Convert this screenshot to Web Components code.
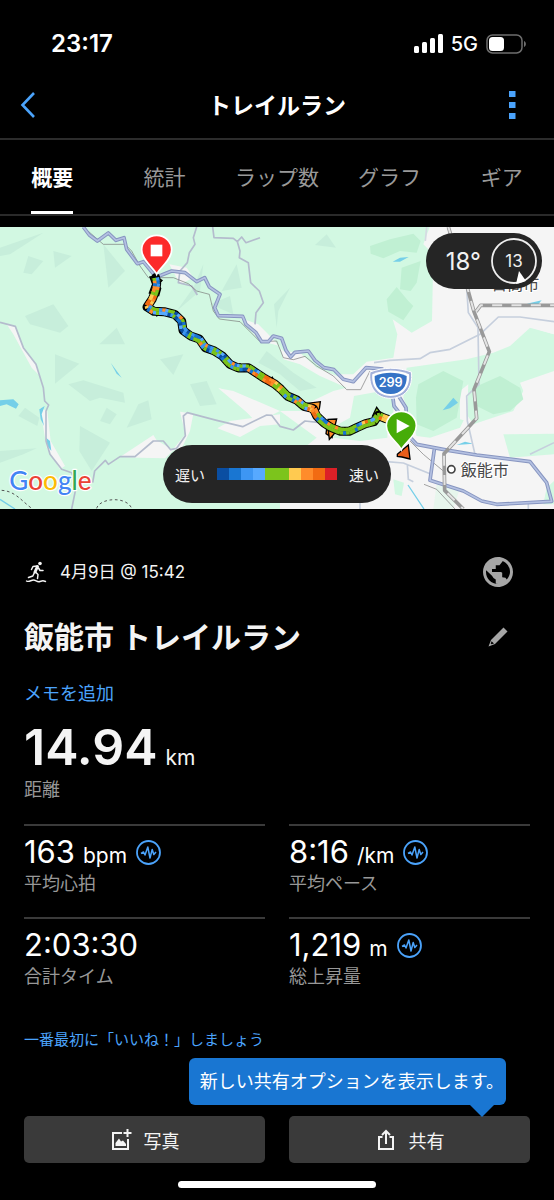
<!DOCTYPE html>
<html lang="ja">
<head>
<meta charset="utf-8">
<meta name="viewport" content="width=device-width, initial-scale=1">
<title>トレイルラン</title>
<style>
  html {
    --blue: #4ba3fb;
    --grey: #989898;
    --line: #3a3a3a;
  }

  body {
    margin: 0;
    background: #000;
    color: #f4f4f4;
    font-family: Inter, "Noto Sans CJK JP", sans-serif;
    font-size: 18px;
  }
</style>
</head>
<body>
<activity-page></activity-page>

<script>
const shared = `
  * { box-sizing: border-box; }
  svg { display: block; flex: none; }
  button {
    margin: 0;
    padding: 0;
    border: 0;
    background: none;
    color: inherit;
    font: inherit;
    cursor: pointer;
  }
  a { color: inherit; text-decoration: none; }
`;

class BaseElement extends HTMLElement {
  constructor() {
    super();
    this.attachShadow({ mode: "open" });
    this.shadowRoot.innerHTML = `<style>${shared}</style>${this.render()}`;
  }

  render() {
    return "";
  }
}

class StatusBar extends BaseElement {
  render() {
    return `
      <style>
        :host {
          display: flex;
          justify-content: space-between;
          align-items: center;
          padding: 28px 28px 12px 51px;
          height: 72px;
          color: #fff;
        }
        .time { font-size: 24px; font-weight: 600; line-height: 32px; }
        .right { display: flex; align-items: center; gap: 8px; }
        .net { font-size: 20px; font-weight: 500; line-height: 32px; }
      </style>
      <span class="time">23:17</span>
      <span class="right">
        <svg width="29" height="20" viewBox="0 0 29 20" fill="#fff">
          <rect x="0" y="12" width="5" height="7" rx="1.5"/>
          <rect x="8" y="8" width="5" height="11" rx="1.5"/>
          <rect x="16" y="4" width="5" height="15" rx="1.5"/>
          <rect x="24" y="0" width="5" height="19" rx="1.5"/>
        </svg>
        <span class="net">5G</span>
        <svg width="40" height="20" viewBox="0 0 40 20">
          <rect x="1" y="1" width="35" height="18" rx="5.5" fill="none" stroke="#6e6e6e" stroke-width="1.5"/>
          <rect x="3" y="3" width="15" height="14" rx="3.5" fill="#fff"/>
          <path d="M38 7c2.500 1 2.500 5 0 6z" fill="#6e6e6e"/>
        </svg>
      </span>
    `;
  }
}

class NavBar extends BaseElement {
  render() {
    return `
      <style>
        :host {
          display: grid;
          grid-template-columns: 56px 1fr 56px;
          align-items: center;
          height: 68px;
          border-bottom: 2px solid #2c2c2c;
          color: #fff;
        }
        h1 {
          margin: 0;
          padding-top: 2px;
          text-align: center;
          font-size: 23px;
          line-height: 32px;
          font-weight: 700;
        }
        button { height: 48px; display: grid; align-items: center; }
        .back { padding-left: 20px; }
        .more { justify-content: end; padding-right: 38px; }
      </style>
      <button class="back" aria-label="戻る">
        <svg width="17" height="28" viewBox="0 0 17 28">
          <path d="M14 2L2.500 14L14 26" fill="none" stroke="var(--blue)" stroke-width="2.600"/>
        </svg>
      </button>
      <h1><slot></slot></h1>
      <button class="more" aria-label="メニュー">
        <svg width="7" height="28" viewBox="0 0 7 28" fill="var(--blue)">
          <path d="M0 0h6.500v6H0zM0 11h6.500v6H0zM0 22h6.500v6H0z"/>
        </svg>
      </button>
    `;
  }
}

class TabBar extends BaseElement {
  render() {
    return `
      <style>
        :host { display: block; overflow: hidden; border-bottom: 2px solid #2a2a2a; }
        nav {
          display: grid;
          grid-template-columns: repeat(5, 1fr);
          margin: 0 -4px;
          justify-items: center;
        }
        a {
          padding-top: 23px;
          height: 74px;
          border-bottom: 3px solid transparent;
          color: #999;
          font-size: 21px;
          line-height: 30px;
          white-space: nowrap;
        }
        .on { color: #fff; border-color: #fff; font-weight: 700; }
      </style>
      <nav>
        <a class="on" href="#summary" aria-current="page">概要</a>
        <a href="#stats">統計</a>
        <a href="#laps">ラップ数</a>
        <a href="#graph">グラフ</a>
        <a href="#gear">ギア</a>
      </nav>
    `;
  }
}

const PACE = ["#0a4ea2", "#1976d2", "#3d96f3", "#57a9ff", "#7cc41c", "#7cc41c", "#ffca50", "#ff8c2b", "#f26b12", "#dc2027"];

const ROUTE = [
  [467, 160], [470, 178], [467, 198], [457, 224], [441, 248], [462, 261], [492, 262],
  [524, 270], [545, 290], [549, 318], [572, 335], [598, 344], [616, 370], [642, 379],
  [667, 395], [690, 420], [715, 431], [745, 430], [768, 445], [795, 463], [824, 479],
  [842, 494], [862, 515], [890, 527], [912, 546], [940, 553], [950, 575], [972, 596],
  [992, 609], [1022, 621], [1047, 621], [1072, 609], [1097, 598], [1122, 592],
  [1135, 573], [1152, 581], [1172, 588]
];

class RouteMap extends BaseElement {
  render() {
    return `
      <style>
        :host { display: block; position: relative; height: 282px; background: #f5f5f5; overflow: hidden; }
        .map { width: 100%; height: 100%; }
        text { font-family: Inter, "Noto Sans CJK JP", sans-serif; }
        .logo {
          font-family: Lato, sans-serif;
          font-size: 78px;
          font-weight: 500;
          paint-order: stroke;
          stroke: #fff;
          stroke-width: 7px;
          stroke-linejoin: round;
        }
        .town { font-size: 48px; fill: #4a4a4a; paint-order: stroke; stroke: #fff; stroke-width: 6px; }
        .sign { font-size: 38px; font-weight: 600; fill: #fff; }
        .overlay {
          position: absolute;
          inset: 0;
          padding: 6px 12px;
          display: flex;
          flex-direction: column;
          justify-content: space-between;
          color: #f2f2f2;
        }
        .weather {
          align-self: flex-end;
          display: flex;
          align-items: center;
          gap: 10px;
          height: 56px;
          padding: 0 5px 0 20px;
          border-radius: 28px;
          background: #252525;
          font-size: 24px;
        }
        .scale {
          align-self: center;
          display: flex;
          align-items: center;
          gap: 12px;
          height: 58px;
          padding: 0 12px;
          border-radius: 29px;
          background: #252525;
          font-size: 15px;
        }
        .bar { display: flex; }
        .bar i { width: 12px; height: 12px; }
      </style>
      <svg class="map" viewBox="0 8 1662 846" preserveAspectRatio="xMidYMid slice">
        <rect y="0" width="1662" height="870" fill="#f5f5f5"/>

        <!-- forest -->
        <g fill="#d2f8e2">
          <path d="M0 0H1292L1270 60L1300 90L1296 290L1235 325L1178 285L1192 330L1180 400L1100 412L1060 450L1010 450L1085 540L1162 540L1162 640L1080 650L1000 640L960 600L910 560L840 560L700 500L655 492L750 572L825 590L840 640V870H0Z"/>
          <path d="M1220 430L1400 405L1480 385L1530 365L1590 310L1662 330V440L1560 475L1570 500L1540 560L1420 600L1400 570L1380 610L1290 640L1250 635L1210 520Z"/>
          <path d="M1510 630L1662 628V690L1530 700Z"/>
          <path d="M1180 765L1212 775L1205 815L1185 810Z"/>
          <path d="M1640 790L1662 770V840H1630Z"/>
          <path d="M1310 780L1380 790L1360 854H1300Z" opacity=".4"/>
          <path d="M1060 510L1180 480V600L1060 610Z"/>
          <path d="M760 600L840 560L950 640L900 680H780Z"/>
        </g>
        <g fill="#f5f5f5">
          <path d="M0 292L46 306L70 370L108 420L120 455L95 430L40 330L20 300Z"/>
          <path d="M120 550L142 560L152 650L195 725L180 735L140 670Z"/>
          <path d="M360 698L460 632L470 648L520 678L495 702L420 700Z"/>
          <path d="M540 562L580 568L570 620L545 672L515 680L556 630Z"/>
          <path d="M690 590L840 570V600L780 605L720 638L652 612Z"/>
          <path d="M655 490L735 522L750 560L830 590L760 585L700 520Z"/>
          <path d="M508 120L560 130L580 160L540 180Z"/>
          <path d="M720 280L775 300L810 335L850 380L900 385L950 430L1060 475L1110 440L1185 430L1175 495L1062 515L1050 580L1005 605L910 580L905 545L1000 500L1040 490L960 455L900 420L850 405L840 365L780 350Z"/>
          <path d="M1380 500L1405 480L1400 590L1380 585Z"/>
          <path d="M1560 300L1662 330V290L1570 285Z"/>
        </g>
        <!-- relief -->
        <g fill="#c7eedb">
          <path d="M310 60L375 140L325 190Z"/>
          <path d="M85 95L130 110L95 150L70 145Z"/>
          <path d="M160 80L215 95L165 130Z"/>
          <path d="M0 70L130 25L30 90L0 95Z"/>
          <path d="M75 275L160 240L205 305L180 325L90 300Z"/>
          <path d="M350 310L298 360L375 360Z"/>
          <path d="M165 390L238 418L165 478Z"/>
          <path d="M480 405L550 390L520 452Z"/>
          <path d="M205 480L250 468L370 505L375 535L300 520L270 530Z"/>
          <path d="M55 575L75 550L118 580L112 605Z"/>
          <path d="M415 540L445 528L455 585L380 610Z"/>
          <path d="M240 605L330 655L275 740L238 680Z"/>
          <path d="M0 680L110 672L70 690L0 715Z"/>
          <path d="M570 480L620 470L650 540L600 545Z"/>
          <path d="M610 120L580 190L530 260L600 200Z"/>
          <path d="M710 120L725 190L665 200Z"/>
          <path d="M630 240L690 215L700 270Z"/>
          <path d="M945 62L980 30L1008 70Z"/>
          <path d="M822 240L870 190L835 260L830 310Z"/>
          <path d="M775 415L800 380L880 445L950 490L900 500L840 450Z"/>
          <path d="M320 550L350 570L330 600L300 590Z"/>
        </g>
        <g fill="#c0f0d3">
          <path d="M1110 65L1170 45L1240 28L1262 50L1250 85L1200 80L1150 102L1112 88Z"/>
          <path d="M1160 225L1190 188L1225 230L1240 245L1210 288L1165 262Z"/>
          <path d="M1205 130L1262 110L1250 175L1232 200L1200 195Z"/>
          <path d="M1255 480L1330 440L1390 470L1370 580L1300 620L1250 600L1248 520Z"/>
          <path d="M1420 490L1500 455L1560 490L1570 525L1530 560L1480 570L1430 545Z"/>
        </g>
        <g fill="#75cfe8">
          <path d="M0 528L40 525L56 540L48 553L20 540L0 545Z"/>
          <path d="M332 415L365 460L350 448Z"/>
          <path d="M118 555L134 545L125 570L132 605L122 585Z"/>
          <path d="M138 640L150 650L154 680L142 665Z"/>
          <path d="M1178 112L1200 100L1226 98L1200 112Z"/>
          <path d="M1328 558L1360 520L1374 535L1350 552Z"/>
          <path d="M1580 238L1625 228L1615 240Z"/>
          <path d="M1370 662L1395 652L1420 658Z"/>
        </g>
        <path d="M1224 782L1272 854M0 825L45 854" fill="none" stroke="#75cfe8" stroke-width="4"/>

        <!-- local roads -->
        <g fill="none" stroke="#b4bccd" stroke-width="5" stroke-linejoin="round">
          <path d="M0 294L46 306L70 370L108 420L130 490L134 530L146 542L138 560L138 650L150 690L185 735L215 745L228 790L215 854"/>
          <path d="M278 775L284 740L316 708L325 720L360 697L405 697L460 650L490 650L512 676L530 672L556 634L550 575L562 565L650 588L728 607L800 572L815 573L840 606L880 617L915 590L960 595"/>
          <path d="M590 8L580 40L585 60L568 85L562 115L540 140L535 175L575 185L592 212"/>
          <path d="M638 8L642 40L700 42L712 52L725 38L738 55L780 40M712 52L720 80L718 100L745 115L752 175L778 200L790 235L768 265L765 300"/>
          <path d="M1122 415L1170 408L1260 403L1290 385L1350 375L1440 330L1495 278L1560 278L1662 292" stroke="#c6cfdd"/>
          <path d="M1400 190L1405 265L1434 310L1437 480L1400 515L1402 590L1425 690" stroke="#c6cfdd"/>
          <path d="M1280 8L1276 50" stroke="#d5d9e2"/>
          <path d="M1590 690L1662 655M1160 712L1210 716L1290 748M1222 720L1225 765L1240 772M1080 830V854M1585 830V854" stroke="#c6cfdd"/>
        </g>
        <g fill="none" stroke="#777" stroke-width="2">
          <path d="M250 8L310 60H375L395 80L420 125L445 160L520 160L565 178L590 200L628 210L640 260L658 284L720 292L780 352L830 350L850 400L880 406L915 396L950 425L1000 455L1040 496H1082L1110 440"/>
          <path d="M1230 650L1270 690L1330 740M1272 780L1310 795L1365 854"/>
          <path d="M5 798C45 800 65 830 95 852M290 852C300 820 380 815 395 852" stroke="#555" stroke-dasharray="8 8" stroke-width="3"/>
        </g>

        <!-- main roads -->
        <g fill="none" stroke-linejoin="round">
          <path d="M250 8L268 32L292 50L325 26L348 48L372 40L380 75L412 118L430 112L468 158L485 152L515 140L555 145L590 172L614 160L628 188L660 210L644 250L655 274L728 276L738 300L768 325L785 352L805 352L820 335L845 342L858 378L872 398L885 384L925 380L945 408L972 430L1002 436L1030 465L1060 472L1098 430L1150 434M1178 515L1182 545L1225 600M1196 515L1218 550L1222 630L1250 660L1345 678L1430 692L1590 712L1640 775L1655 831L1490 840L1445 830L1390 800L1290 768L1303 675" stroke="#8795c0" stroke-width="11"/>
          <path d="M250 8L268 32L292 50L325 26L348 48L372 40L380 75L412 118L430 112L468 158L485 152L515 140L555 145L590 172L614 160L628 188L660 210L644 250L655 274L728 276L738 300L768 325L785 352L805 352L820 335L845 342L858 378L872 398L885 384L925 380L945 408L972 430L1002 436L1030 465L1060 472L1098 430L1150 434M1178 515L1182 545L1225 600M1196 515L1218 550L1222 630L1250 660L1345 678L1430 692L1590 712L1640 775L1655 831L1490 840L1445 830L1390 800L1290 768L1303 675" stroke="#b4c1e2" stroke-width="5"/>
        </g>

        <!-- railway -->
        <g fill="none" stroke-linejoin="round">
          <path d="M1345 8L1402 190L1422 262L1468 382L1422 495L1430 582L1332 688L1334 798L1390 854M1428 262L1442 243H1662" stroke="#999" stroke-width="11"/>
          <path d="M1345 8L1402 190L1422 262L1468 382L1422 495L1430 582L1332 688L1334 798L1390 854M1428 262L1442 243H1662" stroke="#e4e4e4" stroke-width="6" stroke-dasharray="30 28"/>
        </g>

        <text class="town" x="1474" y="198">日高市</text>
        <circle cx="1354" cy="735" r="11" fill="#fff" stroke="#444" stroke-width="5"/>
        <text class="town" x="1382" y="754">飯能市</text>

        <g class="route"></g>

        <!-- national route sign -->
        <path d="M1110 443C1150 428 1194 428 1234 443C1240 490 1214 522 1172 522S1104 490 1110 443Z" fill="#a3b1da" stroke="#fff" stroke-width="3"/>
        <path d="M1117 450C1152 435 1192 435 1227 450C1231 488 1208 515 1172 515S1113 488 1117 450Z" fill="#fff"/>
        <path d="M1124 455C1156 442 1188 442 1220 455C1222 487 1202 509 1172 509S1122 487 1124 455Z" fill="#3573c6"/>
        <text class="sign" x="1172" y="488" text-anchor="middle">299</text>

        <!-- finish and start pins -->
        <path d="M470 150C462 130 425 108 425 76A45 43 0 0 1 515 76C515 108 478 130 470 150Z" fill="#fc2a2a" stroke="#fff" stroke-width="5"/>
        <path d="M452 61H487V96H452Z" fill="#fff"/>
        <path d="M1192 690L1225 662L1230 704L1206 698L1192 696Z" fill="#e85d1a" stroke="#000" stroke-width="4"/>
        <path d="M1204 676C1196 656 1159 636 1159 604A45 43 0 0 1 1249 604C1249 636 1212 656 1204 676Z" fill="#46ac08" stroke="#fff" stroke-width="5"/>
        <path d="M1190 584L1229 605L1190 627Z" fill="#fff"/>

        <text class="logo" x="28" y="797"><tspan fill="#4285f4">G</tspan><tspan fill="#ea4335">o</tspan><tspan fill="#fbbc05">o</tspan><tspan fill="#4285f4">g</tspan><tspan fill="#34a853">l</tspan><tspan fill="#ea4335">e</tspan></text>
      </svg>
      <div class="overlay">
        <div class="weather">
          <span>18°</span>
          <svg width="46" height="46" viewBox="0 0 46 46">
            <circle cx="23" cy="23" r="22" fill="none" stroke="#eee" stroke-width="1.800"/>
            <text x="23" y="29" font-size="17" fill="#eee" text-anchor="middle">13</text>
            <path d="M28 33L25 46L35 43Z" fill="#fff"/>
          </svg>
        </div>
        <div class="scale">
          <span>遅い</span>
          <span class="bar">${PACE.map((c) => `<i style="background:${c}"></i>`).join("")}</span>
          <span>速い</span>
        </div>
      </div>
    `;
  }

  connectedCallback() {
    this.drawRoute();
  }

  drawRoute() {
    const group = this.shadowRoot.querySelector(".route");
    const d = "M" + ROUTE.map((p) => p.join(" ")).join("L");
    // spikes where the GPS track jumps sideways
    const spikes = `
      <path d="M450 158L466 156L486 168L474 182L482 192L476 214L448 206L458 180Z" fill="#7cc41c" stroke="#000" stroke-width="4"/>
      <path d="M915 538L961 532L958 554L940 572Z" fill="#f99a2b" stroke="#000" stroke-width="4"/>
      <path d="M984 585L1010 584L996 640L978 628Z" fill="#ff8c2b" stroke="#000" stroke-width="4"/>
      <path d="M984 610L988 645L1006 624Z" fill="#ff8c2b" stroke="#000" stroke-width="4"/>
      <path d="M1118 574L1130 549L1145 570Z" fill="#7cc41c" stroke="#000" stroke-width="4"/>
      <path d="M808 462L818 456L824 470ZM712 424L720 415L728 424ZM466 270L470 278L478 270Z"/>
    `;
    group.innerHTML = `
      ${spikes}
      <path d="${d}" fill="none" stroke="#000" stroke-width="27" stroke-linejoin="round" stroke-linecap="round"/>
    `;
    const line = group.lastElementChild;
    const total = line.getTotalLength();
    const step = 9;
    let seed = 7;
    let pieces = "";

    for (let at = 0; at < total; at += step) {
      const a = line.getPointAtLength(at);
      const b = line.getPointAtLength(Math.min(at + step + 2, total));
      // two lanes, each with its own pace colour
      const len = Math.hypot(b.x - a.x, b.y - a.y) || 1;
      const nx = (-(b.y - a.y) / len) * 5;
      const ny = ((b.x - a.x) / len) * 5;
      for (const side of [-1, 1]) {
        seed = (seed * 1103515245 + 12345) % 2147483648;
        const color = this.pick(at / total, seed / 2147483648);
        pieces += `<path d="M${a.x + nx * side} ${a.y + ny * side}L${b.x + nx * side} ${b.y + ny * side}" stroke="${color}" stroke-width="11"/>`;
      }
    }
    group.insertAdjacentHTML("beforeend", pieces);
  }

  pick(t, r) {
    const hot = (t > 0.05 && t < 0.1) || (t > 0.53 && t < 0.57) || (t > 0.7 && t < 0.73) || t > 0.97;
    const green = t > 0.5 && !hot;
    if (hot) return PACE[6 + Math.floor(r * 3)];
    if (green) return r < 0.55 ? PACE[4] : PACE[Math.floor(r * 18) % 9];
    return r < 0.3 ? PACE[4] : r < 0.85 ? PACE[Math.floor((r - 0.3) * 7)] : PACE[7];
  }
}

class ActivityHeader extends BaseElement {
  render() {
    return `
      <style>
        :host { display: block; }
        .row { display: flex; align-items: center; justify-content: space-between; }
        .when { display: flex; align-items: center; gap: 12px; font-size: 17px; line-height: 30px; }
        .top { height: 30px; padding-right: 17px; }
        .name { margin-top: 28px; padding-right: 20px; }
        h2 { margin: 0; font-size: 30px; line-height: 44px; font-weight: 700; }
        .note { display: block; margin-top: 20px; color: var(--blue); line-height: 30px; }
      </style>
      <div class="row top">
        <span class="when">
          <svg width="24" height="24" viewBox="0 0 24 24" fill="none" stroke="#f4f4f4" stroke-linecap="round" stroke-linejoin="round">
            <circle cx="16" cy="3.500" r="1.800" fill="#f4f4f4" stroke="none"/>
            <path d="M13.500 6.500L11 12" stroke-width="3"/>
            <path d="M13 6L9 6.500L7.500 9.500M14.500 8L16 10.500L19 10.500M11.500 12L14 14.500L13.500 18.500M10.500 12.500L8.800 16L4.500 17.500" stroke-width="1.500"/>
            <path d="M2.500 21C5 22.500 7 20 9.500 20S13 22.500 16 21.500S19 20.500 21.500 21.500" stroke-width="1.400"/>
          </svg>
          <span>4月9日 @ 15:42</span>
        </span>
        <button aria-label="公開設定">
          <svg width="30" height="30" viewBox="2 2 20 20" fill="#a6a6a6">
            <path d="M12 2C6.480 2 2 6.480 2 12s4.480 10 10 10 10-4.480 10-10S17.520 2 12 2zm0 18c-4.400 0-8-3.600-8-8 0-.400 0-.800.100-1.200L8 14.500L9 16L10.500 17V19.600zM17.800 17L17 15.800L14.800 15.500V12.500L14 12H8V10H10.500V7.500H13L15 5V4.600C18 5.800 20 8.700 20 12C20 13.900 19 15.700 17.800 17z" fill-rule="evenodd"/>
          </svg>
        </button>
      </div>
      <div class="row name">
        <h2><slot></slot></h2>
        <button aria-label="名前を編集">
          <svg width="24" height="24" viewBox="0 0 24 24">
            <path d="M17.500 2.500L21.500 6.500L9 19L2.500 21.500L5 15Z" fill="#a6a6a6"/>
            <path d="M5.600 16.200L8 18.400L5.600 19.300L4.700 18.400Z" fill="#000"/>
          </svg>
        </button>
      </div>
      <a class="note" href="#note">メモを追加</a>
    `;
  }
}

// one figure with its unit and label; "chart" adds the graph button
class StatItem extends BaseElement {
  render() {
    return `
      <style>
        :host { display: block; border-top: 2px solid var(--line); height: 93px; padding-top: 7px; }
        :host([big]) { border: 0; height: 104px; padding-top: 0; }
        .figure { display: flex; align-items: center; gap: 9px; height: 38px; line-height: 38px; color: #fff; }
        .amount { display: flex; align-items: baseline; gap: 8px; white-space: nowrap; }
        .value { font-size: 31px; }
        .unit { font-size: 21px; line-height: 24px; }
        .label { color: var(--grey); line-height: 26px; }
        :host([big]) .figure { height: 54px; line-height: 54px; color: #f4f4f4; }
        :host([big]) .value { font-size: 50px; font-weight: 600; }
        :host([big]) .label { line-height: 32px; }
        button { display: none; }
        :host([chart]) button { display: block; }
      </style>
      <div class="figure">
        <span class="amount"><span class="value"><slot></slot></span><span class="unit"></span></span>
        <button aria-label="グラフを表示">
          <svg width="25" height="25" viewBox="0 0 25 25" fill="none" stroke="var(--blue)">
            <circle cx="12.500" cy="12.500" r="11.500" stroke-width="1.800"/>
            <path d="M5 13.500L7.500 12L9 15L11.800 7L14 18L16.200 9.500L17.800 14.500L20 12" stroke-width="1.500" stroke-linejoin="round"/>
          </svg>
        </button>
      </div>
      <div class="label"></div>
    `;
  }

  connectedCallback() {
    this.shadowRoot.querySelector(".unit").textContent = this.getAttribute("unit") || "";
    this.shadowRoot.querySelector(".label").textContent = this.getAttribute("label");
  }
}

class ActionBar extends BaseElement {
  render() {
    return `
      <style>
        :host { display: grid; grid-template-columns: 1fr 1fr; gap: 24px; }
        .action {
          display: flex;
          justify-content: center;
          align-items: center;
          gap: 12px;
          width: 100%;
          height: 47px;
          border-radius: 5px;
          background: #3a3a3a;
          color: #f4f4f4;
        }
        .share { position: relative; }
        .tip {
          position: absolute;
          right: 24px;
          bottom: 58px;
          height: 47px;
          padding: 0 2px 0 11px;
          border-radius: 6px;
          background: #1976d2;
          color: #fff;
          line-height: 47px;
          white-space: nowrap;
        }
        .tip::after {
          content: "";
          position: absolute;
          top: 100%;
          right: 12px;
          border: 12px solid transparent;
          border-top-color: #1976d2;
          border-bottom: 0;
        }
      </style>
      <button class="action">
        <svg width="22" height="22" viewBox="0 0 22 22">
          <path d="M12 4H3V20H18V10" fill="none" stroke="#f4f4f4" stroke-width="2"/>
          <path d="M17.500 0V8M13.500 4H21.500" stroke="#f4f4f4" stroke-width="2"/>
          <path d="M5.500 17V14L9 9.500L11 12.500L13 11.500L16 15V17Z" fill="#f4f4f4"/>
        </svg>
        <span>写真</span>
      </button>
      <div class="share">
        <button class="action" aria-describedby="tip">
          <svg width="22" height="22" viewBox="0 0 22 22" fill="none" stroke="#f4f4f4" stroke-width="2">
            <path d="M7.500 8H4V20H18V8H14.500M11 15V2.500M7 6L11 2L15 6"/>
          </svg>
          <span>共有</span>
        </button>
        <div class="tip" id="tip" role="tooltip">新しい共有オプションを表示します。</div>
      </div>
    `;
  }
}

class ActivityPage extends BaseElement {
  render() {
    return `
      <style>
        :host { display: flex; flex-direction: column; min-height: 100vh; }
        route-map { margin-top: 11px; }
        main { padding: 48px 24px 0; }
        stat-item[big] { margin-top: 11px; }
        .stats { display: grid; grid-template-columns: 1fr 1fr; column-gap: 24px; }
        .like { display: block; margin: 19px 0 65px; color: var(--blue); font-size: 15px; line-height: 22px; }
        .home { width: 198px; height: 7px; margin: 18px auto 12px; border-radius: 4px; background: #fff; }
      </style>
      <status-bar></status-bar>
      <nav-bar>トレイルラン</nav-bar>
      <tab-bar></tab-bar>
      <route-map></route-map>
      <main>
        <activity-header>飯能市 トレイルラン</activity-header>
        <stat-item big unit="km" label="距離">14.94</stat-item>
        <div class="stats">
          <stat-item chart unit="bpm" label="平均心拍">163</stat-item>
          <stat-item chart unit="/km" label="平均ペース">8:16</stat-item>
          <stat-item label="合計タイム">2:03:30</stat-item>
          <stat-item chart unit="m" label="総上昇量">1,219</stat-item>
        </div>
        <a class="like" href="#like">一番最初に「いいね！」しましょう</a>
        <action-bar></action-bar>
      </main>
      <div class="home"></div>
    `;
  }
}

customElements.define("status-bar", StatusBar);
customElements.define("nav-bar", NavBar);
customElements.define("tab-bar", TabBar);
customElements.define("route-map", RouteMap);
customElements.define("activity-header", ActivityHeader);
customElements.define("stat-item", StatItem);
customElements.define("action-bar", ActionBar);
customElements.define("activity-page", ActivityPage);
</script>
</body>
</html>
